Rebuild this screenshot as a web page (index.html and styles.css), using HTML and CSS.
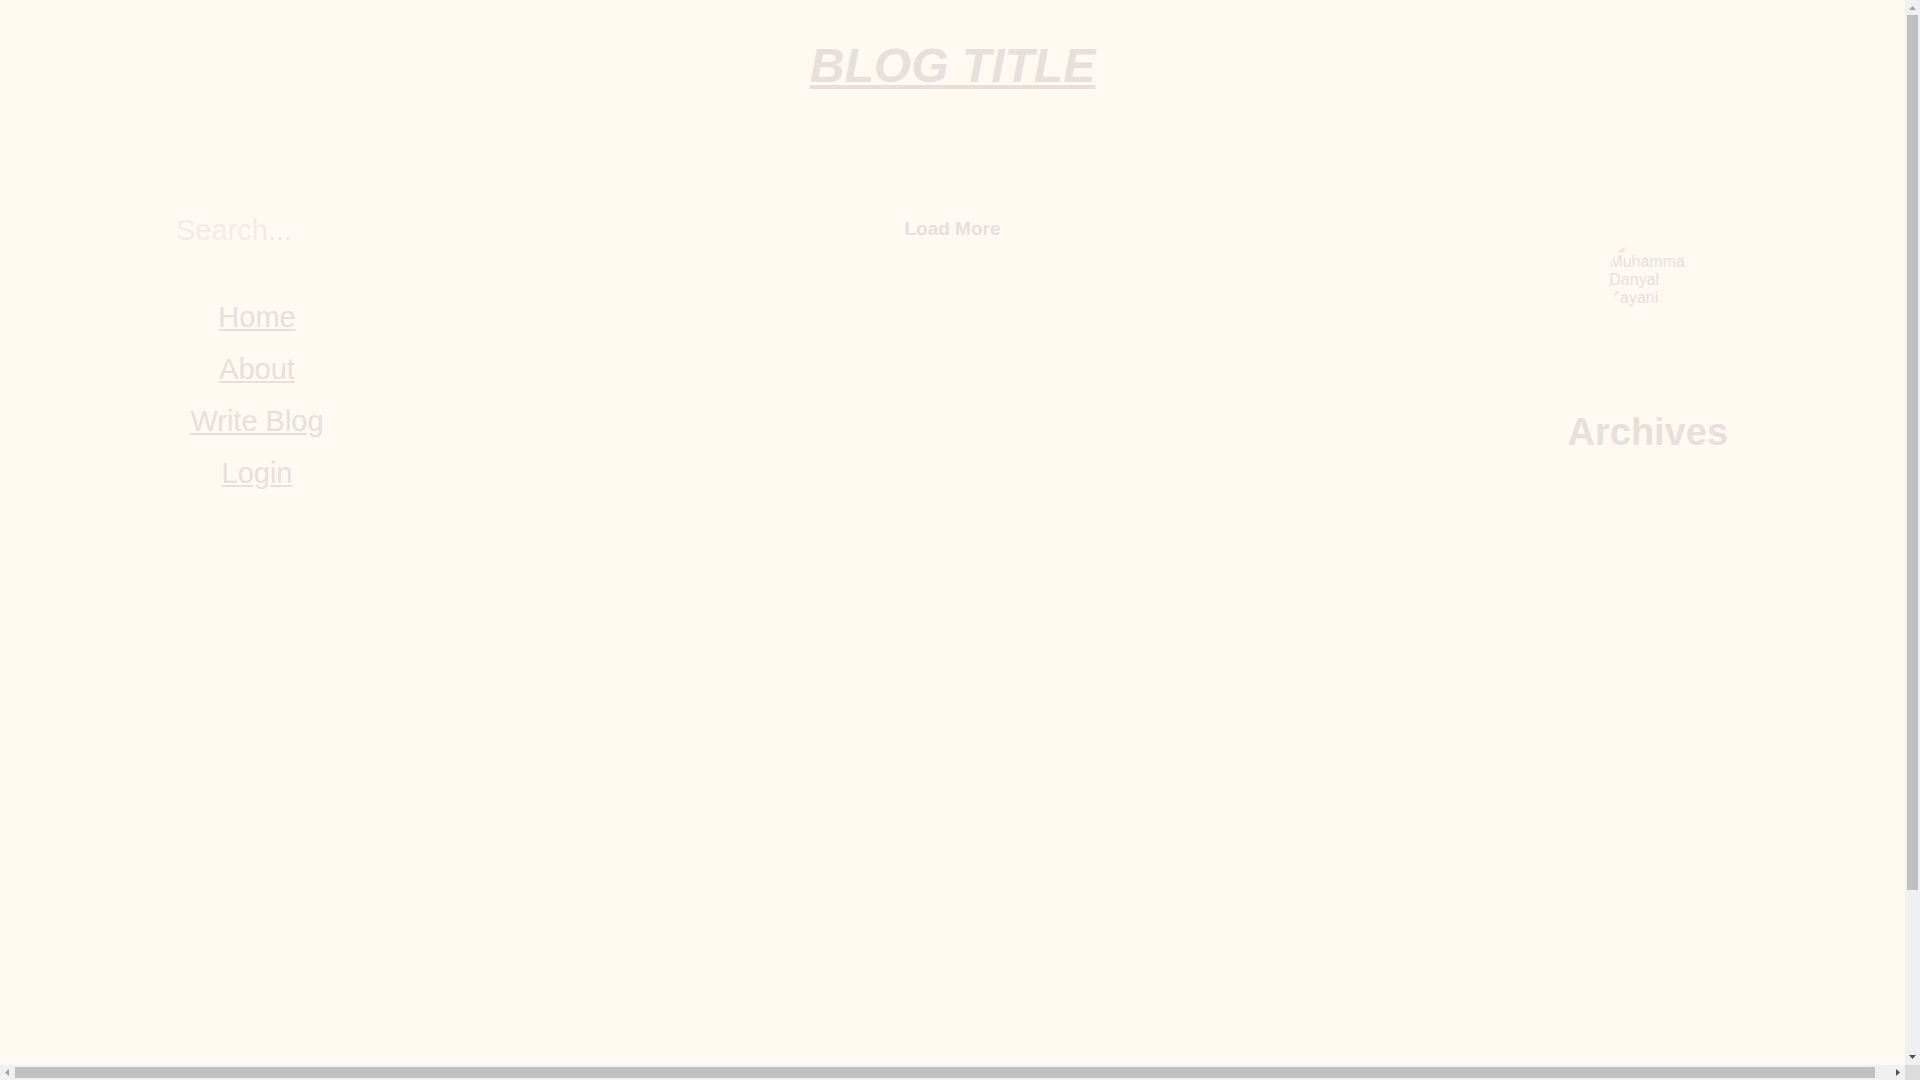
FILE: index.html
```html
<!DOCTYPE html>
<html lang="en">
<head>
<meta charset="utf-8">
<title>Blog Title</title>
<link rel="stylesheet" href="styles.css">
</head>
<body>
<div class="viewport">
  <div class="page">
    <header class="header"><h1 class="title"><a href="#">BLOG TITLE</a></h1></header>
    <div class="columns">
      <aside class="sidebar">
        <input class="search" type="search" placeholder="Search..." aria-label="Search">
        <nav class="nav">
          <a href="#">Home</a>
          <a href="#">About</a>
          <a href="#">Write Blog</a>
          <a href="#">Login</a>
        </nav>
      </aside>
      <main class="main"><button class="load-more" type="button">Load More</button></main>
      <aside class="profile">
        <div class="avatar">
          <svg class="avatar-icon" width="16" height="16" viewBox="0 0 16 16" aria-hidden="true"><path class="fold" d="M15 10v5H9z"/><path class="frame" d="M15.500 6v9.500H8"/></svg>
          <div class="avatar-name">Muhammad Danyal Kayani</div>
        </div>
        <h2 class="archives">Archives</h2>
      </aside>
    </div>
  </div>
  <div class="bar bar-vertical" aria-hidden="true">
    <svg class="arrow dim" width="15" height="15" viewBox="0 0 15 15"><path d="M4 10h7L7.500 6z"/></svg>
    <div class="track"><div class="thumb"></div></div>
    <svg class="arrow" width="15" height="15" viewBox="0 0 15 15"><path d="M4 5h7L7.500 9z"/></svg>
  </div>
  <div class="bar bar-horizontal" aria-hidden="true">
    <svg class="arrow dim" width="15" height="15" viewBox="0 0 15 15"><path d="M9 4v7L5 7.500z"/></svg>
    <div class="track"><div class="thumb"></div></div>
    <svg class="arrow" width="15" height="15" viewBox="0 0 15 15"><path d="M6 4v7l4-3.500z"/></svg>
  </div>
  <div class="corner"></div>
</div>
</body>
</html>
```
FILE: styles.css
```css
* { box-sizing: border-box; }
body {
  margin: 0;
  background: #fff9f2;
  color: #e5e0da;
  font-family: "Liberation Sans", Arial, sans-serif;
  font-size: 16px;
  line-height: 18px;
}
a { color: inherit; }
.viewport {
  display: grid;
  grid-template-columns: minmax(0, 1fr) 15px;
  grid-template-rows: minmax(0, 1fr) 15px;
  height: 100vh;
}
.page { overflow: hidden; }
.header { padding: 38px 0 0; text-align: center; }
.title {
  margin: 0;
  font-size: 48px;
  line-height: 56px;
  font-style: italic;
}
.columns {
  display: grid;
  grid-template-columns: 27% 46% 27%;
  padding-top: 112px;
}
.sidebar { padding: 0 0 0 164px; }
.search {
  display: block;
  width: 100%;
  height: 48px;
  padding: 0 12px;
  border: 0;
  background: transparent;
  color: inherit;
  font: 29px/34px "Liberation Sans", Arial, sans-serif;
}
.search::placeholder { color: #f1ece5; opacity: 1; }
.nav {
  display: flex;
  flex-direction: column;
  align-items: center;
  gap: 18px;
  width: 186px;
  margin-top: 46px;
  font-size: 29px;
  line-height: 34px;
}
.main { text-align: center; }
.load-more {
  padding: 12px;
  border: 0;
  background: transparent;
  color: inherit;
  font: bold 19px/22px "Liberation Sans", Arial, sans-serif;
}
.profile {
  display: flex;
  flex-direction: column;
  align-items: center;
  padding: 31px 0 0;
}
.avatar {
  width: 77px;
  height: 78px;
  border-radius: 39px 0 0 39px;
  overflow: hidden;
}
.avatar-icon { display: block; fill: none; }
.avatar-icon .fold { fill: #e9e8de; }
.avatar-icon .frame { stroke: #f5f1e6; }
.avatar-name { width: 76px; overflow: hidden; }
.archives {
  margin: 95px 0 0;
  font-size: 38px;
  line-height: 44px;
}
.bar { display: flex; background: #f0f0f0; }
.bar-vertical { flex-direction: column; }
.arrow { flex: none; display: block; fill: #505050; }
.arrow.dim { fill: #a3a3a3; }
.track { flex: 1; }
.thumb { background: #c0c0c0; }
.bar-vertical .thumb { width: 11px; height: 84.5%; margin: 0 auto; }
.bar-horizontal .thumb { width: 99.2%; height: 11px; margin-top: 2px; }
.corner { background: #dcdcdc; }
```
